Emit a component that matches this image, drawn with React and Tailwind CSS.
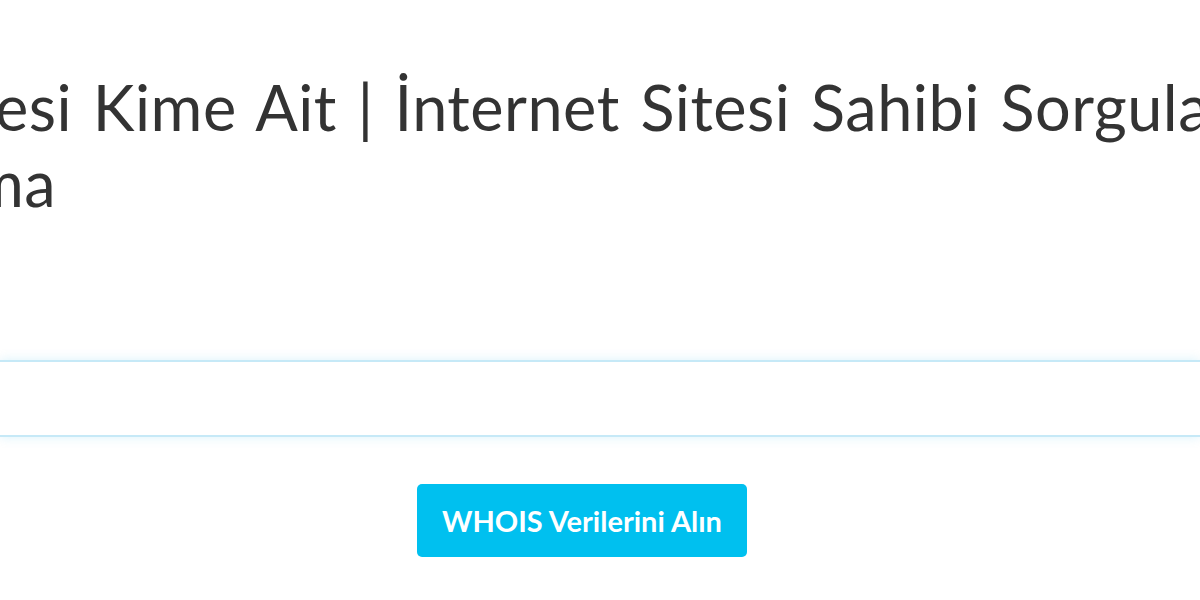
export default function App() {
  return (
    <div className="h-[600px] w-[1200px] overflow-hidden bg-white font-['Lato',sans-serif] text-[#333333]">
      <div className="pt-[69px]">
        <h1 className="ml-[-78px] whitespace-nowrap text-[63px] font-normal leading-[76px] tracking-[0.5px] [word-spacing:4px]">
          Sitesi Kime Ait | İnternet Sitesi Sahibi Sorgulama
          <br />
          <span className="ml-[50px]">ma</span>
        </h1>
      </div>
      <div className="mt-[139px] h-[77px] border-y-2 border-[#c6e9f7] shadow-[0_0_10px_rgba(102,204,238,0.25)]">
        <input type="text" className="h-full w-full bg-transparent px-4 outline-none" />
      </div>
      <div className="mt-[47px] flex justify-center">
        <button className="ml-[-36px] h-[73px] w-[330px] rounded-[5px] bg-[#00c0ef] text-[29px] font-bold text-white">
          WHOIS Verilerini Alın
        </button>
      </div>
    </div>
  );
}
